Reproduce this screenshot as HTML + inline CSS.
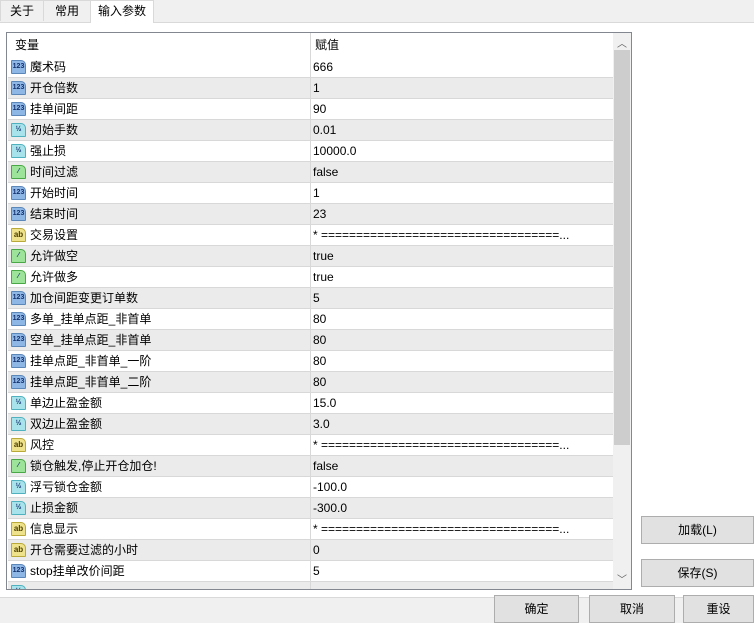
<!DOCTYPE html><html><head><meta charset="utf-8"><style>
body{margin:0;width:754px;height:623px;background:#f0f0f0;position:relative;overflow:hidden;font-family:"Liberation Sans","Noto Sans CJK SC",sans-serif;font-size:12px;color:#000}
.a{position:absolute}
.tab{position:absolute;top:0;height:21px;line-height:21px;text-align:center;border:1px solid #d9d9d9;border-bottom:none;background:#f0f0f0;box-sizing:border-box}
.row{position:absolute;left:1px;width:605px;height:21px;border-bottom:1px solid #d8d8d8;box-sizing:border-box}
.row.g{background:#ebebeb}
.n,.v{position:absolute;top:0;height:20px;line-height:20px;white-space:nowrap}
.n{left:22px}
.v{left:305px}
.d{position:absolute;left:302px;top:0;width:1px;height:21px;background:#d8d8d8}
.ic{position:absolute;left:3px;top:3px;width:15px;height:14px;border:1px solid #5b86b8;box-sizing:border-box;border-radius:1px 5px 1px 1px;font-size:7px;font-weight:bold;line-height:12px;text-align:center;color:#14326e;font-family:"Liberation Sans",sans-serif}
.i1{background:#8fb7e6}.i2{background:#a8e2ea;border-color:#4fb0be}.i3{background:#9ee39a;border-color:#49a845}.i4{background:#efe28c;border-color:#b9a83a;color:#4a3d00;font-size:8px}
.btn{position:absolute;background:#e1e1e1;border:1px solid #adadad;box-sizing:border-box;text-align:center;line-height:26px}
</style></head><body>
<div class="a" style="left:0;top:22px;width:754px;height:576px;background:#fff;border-top:1px solid #d9d9d9;border-bottom:1px solid #d9d9d9;box-sizing:border-box"></div>
<div class="tab" style="left:0;width:44px">关于</div>
<div class="tab" style="left:43px;width:48px">常用</div>
<div class="tab" style="left:90px;width:64px;height:23px;background:#fff">输入参数</div>
<div class="a" style="left:6px;top:32px;width:626px;height:558px;border:1px solid #828790;background:#fff;box-sizing:border-box;overflow:hidden">
<div class="a" style="left:8px;top:2px;line-height:20px">变量</div><div class="a" style="left:308px;top:2px;line-height:20px">赋值</div>
<div class="d" style="top:0;left:303px;height:24px"></div>
<div id="rows"></div>
<div class="a" style="left:606px;top:0;width:18px;height:556px;background:#f0f0f0"></div>
<div class="a" style="left:607px;top:17px;width:16px;height:395px;background:#cdcdcd"></div>
<div class="a" style="left:610px;top:2px;font-size:10px;color:#606060">︿</div>
<div class="a" style="left:610px;top:538px;font-size:10px;color:#606060">﹀</div>
</div>
<div class="btn" style="left:641px;top:516px;width:113px;height:28px">加载(L)</div>
<div class="btn" style="left:641px;top:559px;width:113px;height:28px">保存(S)</div>
<div class="btn" style="left:494px;top:595px;width:85px;height:28px">确定</div>
<div class="btn" style="left:589px;top:595px;width:86px;height:28px">取消</div>
<div class="btn" style="left:683px;top:595px;width:71px;height:28px">重设</div>
<script>
var d=[[1,"魔术码","666"],[1,"开仓倍数","1"],[1,"挂单间距","90"],[2,"初始手数","0.01"],[2,"强止损","10000.0"],[3,"时间过滤","false"],[1,"开始时间","1"],[1,"结束时间","23"],[4,"交易设置","* ==================================..."],[3,"允许做空","true"],[3,"允许做多","true"],[1,"加仓间距变更订单数","5"],[1,"多单_挂单点距_非首单","80"],[1,"空单_挂单点距_非首单","80"],[1,"挂单点距_非首单_一阶","80"],[1,"挂单点距_非首单_二阶","80"],[2,"单边止盈金额","15.0"],[2,"双边止盈金额","3.0"],[4,"风控","* ==================================..."],[3,"锁仓触发,停止开仓加仓!","false"],[2,"浮亏锁仓金额","-100.0"],[2,"止损金额","-300.0"],[4,"信息显示","* ==================================..."],[4,"开仓需要过滤的小时","0"],[1,"stop挂单改价间距","5"],[2,"",""]];
var t={1:"123",2:"½",3:"⁄",4:"ab"},h="";
d.forEach(function(r,i){h+='<div class="row'+(i%2?' g':'')+'" style="top:'+(24+21*i)+'px"><div class="ic i'+r[0]+'">'+t[r[0]]+'</div><div class="n">'+r[1]+'</div><div class="d"></div><div class="v">'+r[2]+'</div></div>';});
document.getElementById("rows").innerHTML=h;
</script>
</body></html>
